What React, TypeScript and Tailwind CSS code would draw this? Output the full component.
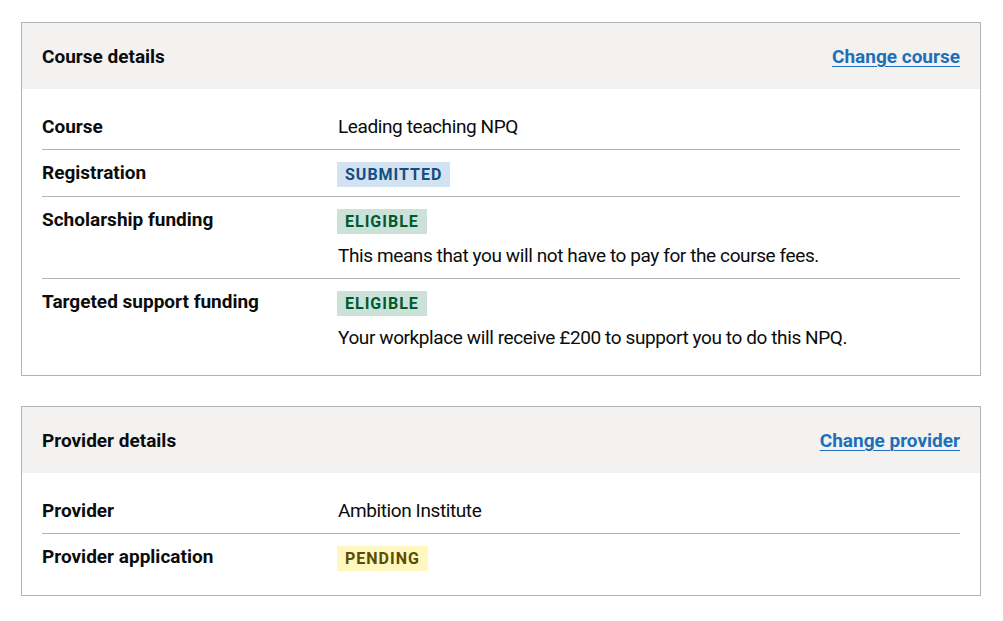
import React from "react";

const font = { fontFamily: 'Roboto, Arial, sans-serif' };

function Tag({ kind, children }: { kind: "blue" | "green" | "yellow"; children: React.ReactNode }) {
  const cls =
    kind === "blue"
      ? "bg-[#d2e2f1] text-[#144e81]"
      : kind === "green"
      ? "bg-[#cce2d8] text-[#005a30]"
      : "bg-[#fff7bf] text-[#594d00]";
  return (
    <div className="h-[26px] pt-[1px] -ml-[1px]">
      <span
        className={`inline-block h-[25px] px-[8px] pt-[3px] text-[16px] leading-[20px] font-bold tracking-[1px] uppercase ${cls}`}
      >
        {children}
      </span>
    </div>
  );
}

function Row({ k, last, children }: { k: string; last?: boolean; children: React.ReactNode }) {
  return (
    <div className={`grid grid-cols-[296px_1fr] py-[10px] ${last ? "" : "border-b border-[#b1b4b6]"}`}>
      <div className="text-[19px] leading-[25px] font-bold pr-[20px]">{k}</div>
      <div className="text-[19px] leading-[25px] tracking-[-0.4px]">{children}</div>
    </div>
  );
}

function Card({ title, action, children }: { title: string; action: string; children: React.ReactNode }) {
  return (
    <div className="border border-[#b1b4b6] mb-[30px]">
      <div className="bg-[#f3f2f1] h-[66px] px-[20px] flex items-center justify-between">
        <h2 className="text-[19px] leading-[25px] font-bold">{title}</h2>
        <a
          href="#"
          className="text-[19px] leading-[25px] font-bold text-[#1d70b8] underline decoration-[1px] underline-offset-[3px]"
        >
          {action}
        </a>
      </div>
      <div className="px-[20px] py-[15px]">{children}</div>
    </div>
  );
}

export default function App() {
  return (
    <div className="bg-white text-[#0b0c0c] pl-[21px] pt-[22px] w-[981px]" style={font}>
      <Card title="Course details" action="Change course">
        <Row k="Course">Leading teaching NPQ</Row>
        <Row k="Registration">
          <Tag kind="blue">Submitted</Tag>
        </Row>
        <Row k="Scholarship funding">
          <Tag kind="green">Eligible</Tag>
          <p className="mt-[10px]">This means that you will not have to pay for the course fees.</p>
        </Row>
        <Row k="Targeted support funding" last>
          <Tag kind="green">Eligible</Tag>
          <p className="mt-[10px]">Your workplace will receive £200 to support you to do this NPQ.</p>
        </Row>
      </Card>
      <Card title="Provider details" action="Change provider">
        <Row k="Provider">Ambition Institute</Row>
        <Row k="Provider application" last>
          <Tag kind="yellow">Pending</Tag>
        </Row>
      </Card>
    </div>
  );
}
